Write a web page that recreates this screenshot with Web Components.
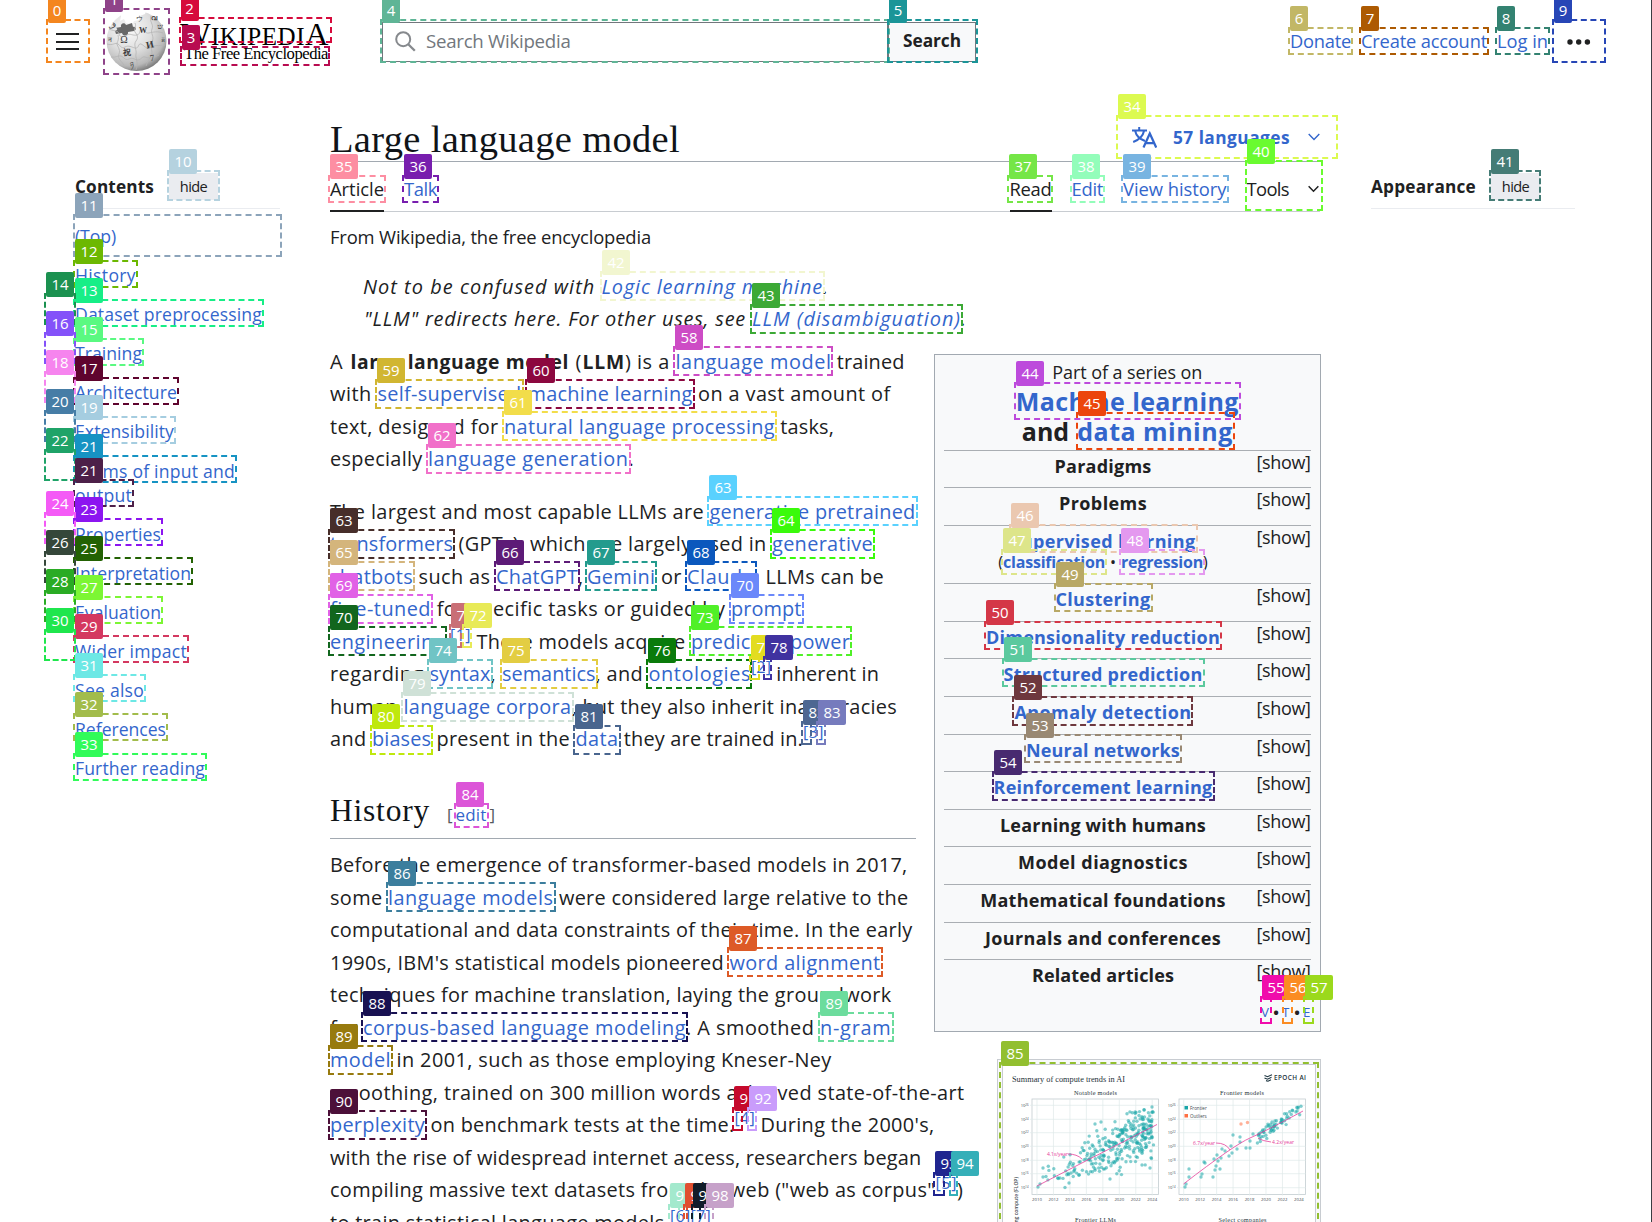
<!DOCTYPE html>
<html lang="en">
<head>
<meta charset="utf-8">
<title>Large language model - Wikipedia</title>
<style>
html,body{margin:0;background:#fff;height:1222px;overflow:hidden}
body{position:relative;font-family:"Open Sans","Noto Sans",sans-serif;color:#202122}
</style>
</head>
<body>
<wiki-page></wiki-page>
<mark-layer></mark-layer>
<script>
const base = (el, html) => { el.attachShadow({mode:'open'}).innerHTML = html; };
const esc = s => s.replace(/&/g,'&amp;').replace(/</g,'&lt;');
const run = (t, w, c='') => `<wiki-run w="${w}" class="${c}">${esc(t)}</wiki-run>`;

class WikiPage extends HTMLElement{
  constructor(){super();base(this,`<style>
  :host{display:block;width:1651px;height:1222px;overflow:hidden;border-right:1px solid #3a3d42}
  .cols{display:grid;grid-template-columns:205px 990px 205px;column-gap:50px;padding-left:75px;align-items:start}
  side-panel{margin-top:87px}
  side-panel.r{margin-left:1px}
  </style>
  <site-header></site-header>
  <div class="cols">
    <side-panel heading="Contents" hw="79" id="c"><toc-list></toc-list></side-panel>
    <article-main></article-main>
    <side-panel class="r" heading="Appearance" hw="105"></side-panel>
  </div>`);}
}

class SiteHeader extends HTMLElement{
  constructor(){super();base(this,`<style>
  :host{display:flex;align-items:center;height:83px;box-sizing:border-box;font-size:18.3px}
  .menu{margin-left:56px;width:23px;display:flex;flex-direction:column;gap:5.5px}
  .menu i{height:2px;background:#202122}
  wiki-globe{margin-left:27px}
  .word{margin-left:13px;width:152px;display:flex;flex-direction:column;font-family:"Liberation Serif",serif;color:#000}
  .wm{line-height:28px;font-size:25px;height:25px;display:flex;align-items:baseline}
  .wm b{font-weight:400;font-size:32.5px}
  .tag{font-size:16.6px;line-height:20px;padding-left:4px;margin-top:-1px}
  .search{margin-left:50px;display:flex;height:40px;box-sizing:border-box}
  .in{width:506px;box-sizing:border-box;border:1px solid #72777d;display:flex;align-items:center;padding-left:12px;color:#72777d;font-size:18.7px}
  .in svg{margin-right:10px}
  .bt{width:88px;box-sizing:border-box;border:1px solid #72777d;background:#f8f9fa;display:flex;align-items:center;justify-content:center;font-weight:700;font-size:17.3px}
  .in wiki-run,.bt wiki-run,nav wiki-run{padding-bottom:2px}
  nav{margin-left:314px;display:flex;gap:10px;color:#36c;align-items:center}
  nav svg{margin-left:9px}
  </style>
  <div class="menu"><i></i><i></i><i></i></div>
  <wiki-globe></wiki-globe>
  <div class="word"><div class="wm"><b>${run('W',31)}</b>${run('IKIPEDI',94)}<b>${run('A',25)}</b></div><div class="tag">${run('The Free Encyclopedia',144)}</div></div>
  <div class="search"><div class="in"><svg width="21" height="21" viewBox="0 0 21 21" fill="none" stroke="#86898d" stroke-width="2"><circle cx="8.2" cy="8.2" r="7"/><path d="M13 13l6.8 6.8" stroke-width="2.3"/></svg>${run('Search Wikipedia',144.5)}</div><div class="bt">${run('Search',58)}</div></div>
  <nav>${run('Donate',61)}${run('Create account',126)}${run('Log in',51)}<svg width="24" height="8" viewBox="0 0 24 8" fill="#202122"><circle cx="3" cy="4" r="2.7"/><circle cx="11.7" cy="4" r="2.7"/><circle cx="20.4" cy="4" r="2.7"/></svg></nav>`);}
}

class WikiGlobe extends HTMLElement{
  constructor(){super();base(this,`<style>:host{display:block;width:61px;height:61px}svg{display:block}</style>
  <svg width="61" height="61" viewBox="0 0 61 61">
  <defs><radialGradient id="g" cx=".38" cy=".3" r=".75"><stop offset="0" stop-color="#fafafa"/><stop offset=".5" stop-color="#dedede"/><stop offset=".82" stop-color="#b8b8b8"/><stop offset="1" stop-color="#6f6f6f"/></radialGradient></defs>
  <circle cx="30.5" cy="30" r="30" fill="url(#g)"/>
  <path d="M14 0h26l-1 3-5 2-1 4-5 1-2 3-6-1-2-4-4 2 1-5z" fill="#fff"/>
  <path d="M9 17l6-1c-1-4 4-5 5-2l6-2 1 4c3-1 4 3 1 4l-6 1c1 4-5 5-6 1l-6 1-1-3c3-1 3-3 0-3z" fill="#686868"/>
  <g fill="none" stroke="#b4b4b4" stroke-width=".8">
  <path d="M3 18c7 3 9 1 10 5s5 3 8 1 6 1 10 0 2-6 5-6 3 5 7 4 9-2 14 0"/>
  <path d="M1 33c6 2 8-2 11 0s3 5 7 3 6 0 10 1 3-5 6-4 4 5 9 3 8-1 15-2"/>
  <path d="M5 46c5 1 7-2 10-1s4 5 8 3 6 1 9 1 4-4 7-3 6 2 14-2"/>
  <path d="M12 24c1 4 0 6-1 8s4 6 2 11 3 7 6 13"/>
  <path d="M29 12c2 4-2 6 0 9s4 5 1 9 1 9 0 13 3 8 0 16"/>
  <path d="M45 5c-2 6 3 8 1 13s3 7 0 13 2 9-1 14-3 5-5 10"/></g>
  <g font-family="Liberation Serif,serif" fill="#3b3b3b" font-size="9" text-anchor="middle">
  <text x="18" y="31.500" font-size="10">Ω</text><text x="37" y="22" font-weight="700" font-size="8">W</text><text x="44" y="37" font-size="10" font-weight="700" transform="rotate(-12 44 34)">И</text><text x="21" y="44" font-weight="700" font-size="8">祝</text><text x="46" y="50" transform="rotate(-10 46 46)">7</text><text x="6" y="17" font-size="8" transform="rotate(-20 6 15)">ف</text><text x="54" y="18" font-size="8">ש</text><text x="33" y="10" font-size="7">ウ</text><text x="48" y="9" font-size="7" font-weight="700">വ</text><text x="26" y="56" font-size="7">ཉ</text><text x="4" y="31" font-size="7">न</text><text x="57" y="31" font-size="6">й</text></g></svg>`);}
}

class SidePanel extends HTMLElement{
  constructor(){super();const h=this.getAttribute('heading');base(this,`<style>
  :host{display:block;font-size:17.2px}
  .h{height:32px;display:flex;align-items:center;gap:15px;border-bottom:1px solid #eaecf0;padding-bottom:6px;font-weight:700}
  .b{box-sizing:border-box;width:49px;height:27px;background:#eaecf0;font-weight:400;font-size:14.6px;display:flex;align-items:center;justify-content:center}
  </style><div class="h">${run(h,this.getAttribute('hw'))}<span class="b">${run('hide',27.5)}</span></div><slot></slot>`);}
}

class TocList extends HTMLElement{
  constructor(){super();
  const it=[['(Top)',41],['History',61],['Dataset preprocessing',187],['Training',67],['Architecture',102],['Extensibility',99],['Forms of input and',160,'output',57],['Properties',86],['Interpretation',116],['Evaluation',86],['Wider impact',112],['See also',69],['References',91],['Further reading',130]];
  base(this,`<style>:host{display:flex;flex-direction:column;gap:15.1px;padding-top:15px;color:#36c;font-size:17.6px;line-height:24px}div div{height:24px}</style>`+
  it.map(a=>`<div><div>${run(a[0],a[1])}</div>${a[2]?`<div>${run(a[2],a[3])}</div>`:''}</div>`).join(''));}
}

/* One paragraph: each line is a list of [text, left edge, kind]; the last entry closes the line. */
class TextBlock extends HTMLElement{
  set lines(v){
    this.shadowRoot.innerHTML=`<style>:host{display:block;font-size:19.9px}
    .l{height:32.5px;line-height:32.5px;display:flex;white-space:pre}
    .a,.s{color:#36c}.b{font-weight:700;font-size:19.3px}.s{font-size:16px;line-height:19px}</style>`+
    v.map(l=>`<div class="l" style="padding-left:${l[0][1]-330}px">`+l.slice(0,-1).map((s,i)=>run(s[0],+((l[i+1][1]??l[i+1])-s[1]).toFixed(2),s[2]||'')).join('')+'</div>').join('');
  }
  constructor(){super();this.attachShadow({mode:'open'});this.lines=BLOCKS[this.getAttribute('name')];}
}
const BLOCKS={
hat:[
 [['Not to be confused with ',363],['Logic learning machine',601.5,'a'],['.',823],829],
 [['"LLM" redirects here. For other uses, see ',364],['LLM (disambiguation)',752,'a'],['.',961],967]],
p1:[
 [['A ',330],['large language model',350.5,'b'],[' (',569],['LLM',582.5,'b'],[') is a ',625],['language model',675.5,'a'],[' trained',831.5],904.5],
 [['with ',330],['self-supervised',377.5,'a'],[' ',521.5],['machine learning',527.5,'a'],[' on a vast amount of',692.5],890.5],
 [['text, designed for ',330],['natural language processing',504,'a'],[' tasks,',775],834],
 [['especially ',330],['language generation',428,'a'],['.',628.5],632.5]],
p2:[
 [['The largest and most capable LLMs are ',330],['generative pretrained',709.5,'a'],915.5],
 [['transformers',330,'a'],[' (GPTs), which are largely used in ',453],['generative',772,'a'],873],
 [['chatbots',330,'a'],[' such as ',413],['ChatGPT',496,'a'],[', ',578],['Gemini',587,'a'],[' or ',655.5],['Claude',687,'a'],['. LLMs can be',754.5],884],
 [['fine-tuned',330,'a'],[' for specific tasks or guided by ',431],['prompt',731,'a'],801.5],
 [['engineering',330,'a'],['.',445],['[1]',450,'s'],[' These models acquire ',471],['predictive power',691,'a'],850],
 [['regarding ',330],['syntax',429.5,'a'],[', ',490.5],['semantics',502,'a'],[', and ',595.5],['ontologies',648.5,'a'],['[2]',751,'s'],[' inherent in',771],879],
 [['human ',330],['language corpora',403.5,'a'],[', but they also inherit inaccuracies',571.5],897],
 [['and ',330],['biases',372,'a'],[' present in the ',431],['data',575.5,'a'],[' they are trained in.',618.5],['[3]',803,'s'],824]],
p3:[
 [['Before the emergence of transformer-based models in 2017,',330],907.5],
 [['some ',330],['language models',388,'a'],[' were considered large relative to the',553.5],908.5],
 [['computational and data constraints of their time. In the early',330],912.5],
 [['1990s, IBM\'s statistical models pioneered ',330],['word alignment',729.5,'a'],880.5],
 [['techniques for machine translation, laying the groundwork',330],891.5],
 [['for ',330],['corpus-based language modeling',363,'a'],['. A smoothed ',686],['n-gram',820,'a'],891.5],
 [['model',330,'a'],[' in 2001, such as those employing Kneser-Ney',391],831.7],
 [['smoothing, trained on 300 million words achieved state-of-the-art',330],964.5],
 [['perplexity',330,'a'],[' on benchmark tests at the time.',425],['[4]',734.5,'s'],[' During the 2000\'s,',755],934.5],
 [['with the rise of widespread internet access, researchers began',330],921.5],
 [['compiling massive text datasets from the web ("web as corpus"',330],['[5]',935.5,'s'],[')',957],963],
 [['to train statistical language models.',330],['[6]',670,'s'],['[7]',690.5,'s'],711]]
};

class ArticleMain extends HTMLElement{
  constructor(){super();base(this,`<style>
  :host{display:block;width:990px;font-size:18.4px}
  .t{height:78px;border-bottom:1px solid #a2a9b1;display:flex;justify-content:space-between;align-items:flex-end}
  .h1{font:38.5px/44px "Liberation Serif",serif;color:#101418}
  .lang{display:flex;align-items:center;color:#36c;font-weight:700;font-size:17.3px;height:44px;margin-bottom:2px}
  .lang svg:first-child{margin-right:16px}.lang svg:last-child{margin-left:18px}
  .bar{height:49px;border-bottom:1px solid #c8ccd1;display:flex;gap:20px;color:#36c}
  .bar>*{display:flex;align-items:center;padding-top:6px;box-sizing:border-box;line-height:30px;border-bottom:2px solid transparent;height:50px;margin-bottom:-1px}
  .bar .on{color:#202122;border-bottom-color:#202122}
  .bar .k{color:#202122}
  .sp{margin-left:auto}
  .from{height:50px;line-height:49px}
  .hat{margin-top:8.5px;font-style:italic}
  .two{display:flex;margin-top:10px;align-items:flex-start}
  .txt{width:585.5px;flex:none}
  aside{margin-left:18px;margin-top:8.5px;width:387.5px;display:flex;flex-direction:column;align-items:flex-end;gap:27px;flex:none}
  .h2{height:43px;margin-top:39.25px;border-bottom:1px solid #a2a9b1;display:flex;align-items:baseline;font:31.5px/32px "Liberation Serif",serif;color:#101418}
  .h2 span{font:17px/22px "Open Sans",sans-serif;margin-left:17px;color:#54595d}.h2 .e{color:#36c;margin-left:3px;margin-right:3px}
  </style>
  <div class="t"><div class="h1">${run('Large language model',350)}</div>
  <div class="lang"><svg width="25" height="21" viewBox="0 0 25 21" fill="none" stroke="#36c" stroke-width="2"><path d="M0 3.6h15M7.2 0v3.6M3.2 4c1 5 4.5 8 9.8 10M12 4C11 9 6.500 13 1.200 15"/><path d="M11.500 20.500L17.800 6.500L24.200 20.500M13.500 16.200h8.700" stroke-width="2.200"/></svg>${run('57 languages',117)}<svg width="12" height="8" viewBox="0 0 12 8" fill="none" stroke="#36c" stroke-width="1.4"><path d="M.7 1l5.300 5.500L11.300 1"/></svg></div></div>
  <div class="bar"><div class="on">${run('Article',54)}</div><div>${run('Talk',33)}</div>
  <div class="on sp">${run('Read',42)}</div><div>${run('Edit',31.500)}</div><div>${run('View history',103.500)}</div><div class="k">${run('Tools',42.500)}<svg style="margin:0 1px 0 19px" width="11" height="8" viewBox="0 0 12 8" fill="none" stroke="#202122" stroke-width="1.6"><path d="M.7 1l5.300 5.500L11.300 1"/></svg></div></div>
  <div class="from">${run('From Wikipedia, the free encyclopedia',321)}</div>
  <div class="hat"><text-block name="hat"></text-block></div>
  <div class="two"><div class="txt"><text-block name="p1"></text-block><text-block name="p2" style="margin-top:20px"></text-block>
  <div class="h2">${run('History',100)}<span>[</span><span class="e">${run('edit',31)}</span><span style="margin-left:0">]</span></div>
  <text-block name="p3" style="margin-top:10.250px"></text-block></div>
  <aside><series-box></series-box><trend-figure></trend-figure></aside></div>`);}
}

class SeriesBox extends HTMLElement{
  constructor(){super();
  const r=[['Paradigms',97,37,0],['Problems',88,38,0],['Supervised learning',185,57.5,1],['Clustering',95,38,1],['Dimensionality reduction',234,37,1],['Structured prediction',199,38,1],['Anomaly detection',177,38,1],['Neural networks',154,37,1],['Reinforcement learning',219,38,1],['Learning with humans',206,37,0],['Model diagnostics',170,38,0],['Mathematical foundations',245.5,38,0],['Journals and conferences',236,37,0],['Related articles',142,36,0]];
  base(this,`<style>
  :host{display:block;box-sizing:border-box;width:387.5px;height:678px;border:1px solid #a2a9b1;background:#f8f9fa;padding:3px 9px 0;font-size:18px;text-align:center}
  .c{display:flex;justify-content:center}
  .p{line-height:28px;height:28px}
  .h{font-size:25px;font-weight:700;line-height:30px;height:30px}
  .row{border-top:1px solid #aaaeb3;box-sizing:border-box;display:flex}
  .n{flex:0 0 319px;font-weight:700;line-height:31px}.n div{height:23px}
  .n div.sm{font-size:16px;line-height:27px}
  .n .sm i{font-style:normal;font-weight:400}
  .s{margin-left:-6px;line-height:23px;flex:none}
  .a{color:#36c}
  .v{display:flex;justify-content:flex-end;font-size:13.300px;line-height:18px;color:#36c;margin-top:8px}
  .v b{color:#202122;width:10px;font-size:15px;padding:0 1px}
  </style>
  <div class="c p">${run('Part of a series on',150)}</div>
  <div class="c h a">${run('Machine learning',223)}</div>
  <div class="c h" style="margin-bottom:4px">${run('and',47.5)}<span style="width:8px"></span>${run('data mining',155.5,'a')}</div>`+
  r.map((a,i)=>`<div class="row" style="height:${a[2]}px"><div class="n"><div class="c ${a[3]?'a':''}">${run(a[0],a[1])}</div>${i==2?`<div class="c sm"><i>(</i>${run('classification',102,'a')}<i style="width:16px">•</i>${run('regression',82,'a')}<i>)</i></div>`:''}</div><div class="s">${run('[show]',54)}</div></div>`).join('')+
  `<div class="v">${run('V',9)}<b>•</b>${run('T',9)}<b>•</b>${run('E',8)}</div>`);}
}

class TrendFigure extends HTMLElement{
  constructor(){super();
  let seed=11;const rnd=()=>(seed=(seed*16807)%2147483647)/2147483647;
  const ga=()=>(rnd()+rnd()-1);
  let d='';const dot=(x,y,c='#17a5a8')=>{d+=`<circle cx="${x.toFixed(1)}" cy="${y.toFixed(1)}" r="1.7" fill="${c}"/>`};
  for(let i=0;i<300;i++){const u=Math.pow(rnd(),.5);let x=1045+u*109,y=1180-u*54+ga()*(12+u*30);
    if(y<1108)y=1112+rnd()*22;if(y>1180)y=1160+rnd()*19;if(x>1155)x=1140+rnd()*14;dot(x,y);}
  [[1038,1187],[1040,1184],[1043,1168],[1043,1177],[1065,1187.5],[1069,1183],[1095,1124],[1101,1122],[1152,1107],[1150,1168],[1142,1165],[1110,1179]].forEach(p=>dot(...p));
  [[1185,1187],[1186,1184],[1189,1169],[1189,1177],[1201,1177],[1204,1162],[1205,1163],[1202,1174],[1213,1177],[1215,1170],[1216,1166],[1220,1169],[1214,1159],[1217,1155],[1221,1158],[1218,1161],[1222,1149],[1225,1151],[1229,1156],[1232,1153],[1231,1146],[1233,1135],[1237,1149],[1240,1142],[1240,1137],[1246,1148],[1250,1148],[1250,1141],[1253,1134]].forEach(p=>dot(...p));
  for(let i=0;i<62;i++){const u=rnd();dot(1257+u*44,1137-u*27+ga()*8);}
  dot(1298,1108);dot(1241,1124,'#ff7043');dot(1247.500,1122.500,'#ff7043');
  let g='',t='';
  const ys=[1105.3,1119.3,1132.7,1146.3,1160.3,1173.7,1187.7];
  for(const [x0,tx] of [[1032,1037],[1179,1183.7]]){
    g+=`<rect x="${x0}" y="1099" width="126.500" height="95.500" fill="none" stroke="#c3ccd0" stroke-width=".8"/>`;
    ys.forEach((y,i)=>{g+=`<path d="M${x0-2} ${y}h128.500" stroke="#dfe9e9" stroke-width=".7"/>`;t+=`<text x="${x0-3.500}" y="${y+1.500}" font-size="4" text-anchor="end">10<tspan font-size="2.800" dy="-1.300">${26-i*2}</tspan></text>`});
    for(let i=0;i<8;i++){const x=tx+16.46*i;g+=`<path d="M${x} 1099v96.500" stroke="#dfe9e9" stroke-width=".7"/>`;t+=`<text x="${x}" y="1200.500" font-size="4.300" text-anchor="middle">${2010+i*2}</text>`}
  }
  base(this,`<style>:host{display:block;box-sizing:border-box;width:324px;height:300px;border:1px solid #c8ccd1;background:#f8f9fa;padding:4px}
  div{border:1px solid #c8ccd1;background:#fff;height:290px}svg{display:block}</style>
  <div><svg width="312" height="157" viewBox="1003 1065 312 157" font-family="Open Sans,sans-serif" fill="#3c464d">
  <g font-family="Liberation Serif,serif" fill="#253238"><text x="1012" y="1081.500" font-size="8.300" textLength="113">Summary of compute trends in AI</text>
  <g font-size="6.300" text-anchor="middle"><text x="1095.500" y="1095" textLength="43">Notable models</text><text x="1242" y="1095" textLength="44">Frontier models</text><text x="1095.500" y="1221.500" textLength="41">Frontier LLMs</text><text x="1242.500" y="1221.500" textLength="48">Select companies</text></g></g>
  <text x="1274" y="1080.300" font-size="6.400" font-weight="600" textLength="32" fill="#1d3540">EPOCH AI</text>
  <path d="M1264.500 1075.500l3 1.200 4.500-2M1264.500 1078l3 1.200 4-2M1266 1080.600l2 .6 3-1.500" fill="none" stroke="#1d3540" stroke-width="1.100"/>
  ${g}${t}<g fill-opacity=".55">${d}</g>
  <g fill="none" stroke="#e6409a" stroke-width=".8"><path d="M1037 1186L1157 1124.500M1183.500 1184Q1234 1145 1250 1138T1303 1111M1068 1154q9 0 14 5M1216 1143q10 0 14 7M1271 1142q-9-1-13-4"/></g>
  <g fill="#e6409a" font-size="5"><text x="1047" y="1155.500" textLength="21">4.1x/year</text><text x="1193" y="1145" textLength="22">6.7x/year</text><text x="1272" y="1143.500" textLength="22">4.2x/year</text></g>
  <rect x="1184.500" y="1106" width="3.500" height="3.500" fill="#17a5a8"/><rect x="1184.500" y="1114" width="3.500" height="3.500" fill="#ff7043"/><text x="1190" y="1109.500" font-size="4.500">Frontier</text><text x="1190" y="1117.500" font-size="4.500">Outliers</text>
  <text transform="translate(1017.500 1177) rotate(-90)" text-anchor="end" font-size="5" font-weight="600">Training compute (FLOP)</text>
  </svg></div>`);}
}

class MarkBox extends HTMLElement{
  constructor(){super();this.attachShadow({mode:'open'});}
  connectedCallback(){
    const [x,y,X,Y]=this.getAttribute('at').split(',').map(Number),n=this.getAttribute('n'),c=this.getAttribute('c');
    this.shadowRoot.innerHTML=`<style>
    :host{display:block;position:absolute;left:${x}px;top:${y}px;width:${X-x}px;height:${Y-y}px;box-sizing:border-box;border:2px dashed ${c}}
    b{position:absolute;left:0;top:-23.500px;height:25px;width:${n.length>1?28:18}px;background:${c};color:#fff;border-radius:2px;font:400 15px/25px "Open Sans",sans-serif;text-align:center}
    </style><b>${n}</b>`;
  }
}
class MarkLayer extends HTMLElement{
  constructor(){super();
  const M=`0 46,19,90,63 #f4861f
1 103,8,170,75 #8f4389
2 178.5,17,332,43 #d60a3c
3 180,46,330,66 #b80b50
4 380,19,890,63 #5fb596
5 887,19,978,63 #1b9598
6 1288,27,1353,55 #c2b766
7 1359,27,1489,55 #ad5a02
8 1495,27,1550,55 #338271
9 1552,19,1606,63 #2746b6
10 167,170,220,201 #b5d2df
11 73,214,282,257 #8ca4ba
12 73,260,138,288 #6cb802
13 73,299,264,327 #17ee87
14 44,293,76,325 #1b9150
15 73,338,144,366 #5af981
16 44,332,76,364 #8452f9
17 73,377,179,405 #5f042e
18 44,371,76,403 #f684ee
19 73,416,176,444 #a5cde0
20 44,410,76,442 #467da6
21 73,455,237,483 #1693c3
22 44,449,76,481 #1fa368
21 73,479,134,507 #4d2049
23 73,518,163,546 #8c15f0
24 44,512,76,544 #f45af6
25 73,557,193,585 #236203
26 44,551,76,583 #35473a
27 73,596,163,624 #7cf634
28 44,590,76,622 #2aab24
29 73,635,189,663 #d43860
30 44,629,76,661 #1fe64d
31 73,674,146,702 #6de8e5
32 73,713,168,741 #a2bc4b
33 73,753,207,781 #31fb59
34 1116,115,1338,159 #dcfa50
35 328,175,386,203 #fd8ea2
36 402,175,439,203 #781eae
37 1007,175,1053,203 #75e647
38 1070,175,1105,203 #93fdba
39 1121,175,1229,203 #78b4e1
40 1245,160,1323,211 #6afb30
41 1489,170,1541,201 #457c76
42 600,271,825,301 #f2f6d0
43 750,304,963,334 #3ca936
44 1014,382,1241,420 #bd4bdc
45 1076,412,1235,450 #ec450c
46 1009,524,1198,553 #ebc8b0
47 1001,549,1107,575 #dde58a
48 1119,549,1205,575 #e499ef
49 1054,583,1153,612 #b8a865
50 984,621,1222,650 #d43747
51 1002,658,1205,687 #5bc99e
52 1012,696,1193,726 #6e383e
53 1024,734,1182,763 #998873
54 992,771,1215,801 #482a70
55 1260,996,1272,1024 #f00cab
56 1282,996,1293,1024 #fb8c22
57 1303,996,1314,1024 #9bd91c
58 673,346,833,376 #cd4cc5
59 375,379,524,409 #d1b631
60 525,379,695,409 #8c083f
61 502,411,777,441 #f2dd4a
62 426,444,631,474 #f170c9
63 707,496,918,526 #5ad1fe
63 328,529,455,559 #472e2a
64 770,529,875,559 #3afa0b
65 328,561,415,591 #d4b57c
66 494,561,580,591 #5d1b77
67 585,561,657,591 #239b8d
68 685,561,757,591 #0b58bd
69 328,594,433,624 #e161e6
70 729,594,804,624 #6b88fa
70 328,626,447,656 #12661e
71 449,624,462,648 #c96f76
72 462,624,472,648 #e8ea57
73 689,626,852,656 #50f028
74 427,659,493,689 #70c4c5
75 500,659,598,689 #e3cd42
76 646,659,752,689 #0a7b0b
77 749,656,760,680 #e3dc20
78 763,656,772,680 #4032a0
79 401,692,574,722 #cfe1d7
80 370,725,433,755 #bfe80d
81 573,725,621,755 #49658e
82 801,721,812,745 #4d6792
83 816,721,826,745 #767bbd
84 454,803,489,828 #dc55d8
85 999,1062,1319,1400 #92bf30
86 386,882,556,912 #3c7e9d
87 727,947,883,977 #dd5a26
88 361,1012,688,1042 #181152
89 818,1012,894,1042 #6cdc9d
89 328,1045,393,1075 #977a0e
90 328,1110,427,1140 #4c1039
91 732,1107,743,1131 #c50a2c
92 747,1107,757,1131 #c99cfb
93 933,1172,945,1196 #20258f
94 949,1172,958,1196 #35afb8
95 668,1204,680,1228 #a3e9cd
96 683,1204,688,1228 #e04f30
97 691,1204,701,1228 #111d2a
98 704,1204,714,1228 #c6a1c9`;
  base(this,`<style>:host{display:block;position:absolute;left:0;top:0;width:1652px;height:1222px;overflow:hidden}</style>`+
  M.split('\n').map(l=>{const [n,at,c]=l.split(' ');return `<mark-box n="${n}" at="${at}" c="${c}"></mark-box>`}).join(''));}
}

/* A run of text whose tracking is set so that it fills exactly w pixels. */
class WikiRun extends HTMLElement{
  constructor(){super();base(this,`<style>:host{display:inline-block;white-space:pre;flex:none}span{display:inline-block;white-space:pre}</style><span><slot></slot></span>`);}
  connectedCallback(){
    const w=+this.getAttribute('w'),s=this.shadowRoot.querySelector('span');
    const n=this.textContent.length,nat=s.getBoundingClientRect().width;
    s.style.letterSpacing=((w-nat)/n).toFixed(4)+'px';
    this.style.width=w+'px';
  }
}
customElements.define('wiki-page',WikiPage);
customElements.define('site-header',SiteHeader);
customElements.define('wiki-globe',WikiGlobe);
customElements.define('side-panel',SidePanel);
customElements.define('toc-list',TocList);
customElements.define('article-main',ArticleMain);
customElements.define('text-block',TextBlock);
customElements.define('series-box',SeriesBox);
customElements.define('trend-figure',TrendFigure);
customElements.define('mark-box',MarkBox);
customElements.define('mark-layer',MarkLayer);
customElements.define('wiki-run',WikiRun);
</script>
</body>
</html>
